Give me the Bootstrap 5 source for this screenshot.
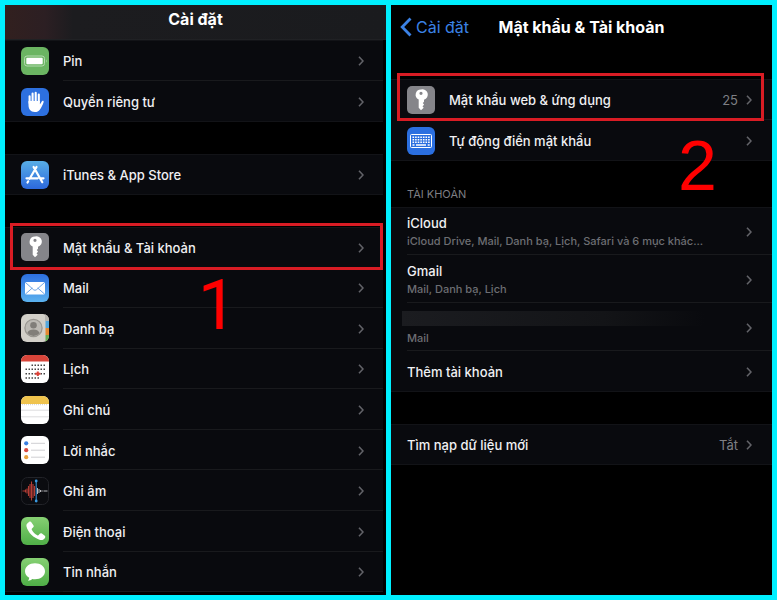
<!DOCTYPE html>
<html lang="vi" data-bs-theme="dark">
<head>
<meta charset="utf-8">
<meta name="viewport" content="width=device-width, initial-scale=1">
<title>Cài đặt</title>
<link href="https://cdn.jsdelivr.net/npm/bootstrap@5.3.0/dist/css/bootstrap.min.css" rel="stylesheet">
<style>
  body { background: #00f0ff; font-family: Inter, "Noto Sans", sans-serif; font-size: 13px; line-height: 18px; color: #f0f0f3; }
  .frame { display: grid; grid-template-columns: minmax(0, 1fr) minmax(0, 1fr); padding: 5px; gap: 5px; }
  .screen { background: #000; }
  .screen-left { padding-right: 3px; }
  .titlebar { height: 35px; padding-bottom: 7px; margin-right: -3px; border-bottom: 1px solid #202124;
    background: linear-gradient(90deg, #32201f 0, #2c1f23 40px, #1c1c1f 68px, #1a1b1e 100%); }
  .titlebar h1, .backbar h1 { font-size: 16px; line-height: 20px; font-weight: 700; color: #fff; }
  .backbar { display: grid; grid-template-columns: 1fr auto 1fr; align-items: center; height: 44px; padding: 0 9px; margin-bottom: 30px; }
  .back { color: #3b82e6; font-size: 16px; line-height: 20px; gap: 4px; }
  .group { background: #090a0e; box-shadow: inset 0 1px #121317, inset 0 -1px #121317; margin-bottom: 32px; }
  .group-long { margin-bottom: 3px; }
  .item { color: inherit; min-height: 40px; padding-left: 16px; }
  .group-short > .item, .group-accounts > .item { min-height: 41px; }
  .group-long > .item { flex: 1 1 0; min-height: 40px; }
  .group-accounts > .account { min-height: 48px; }
  .glyph { width: 28px; height: 28px; margin-right: 14px; flex: none; }
  .body-line { border-bottom: 1px solid #191a1d; padding: 2px 19px 0 0; gap: 8px; font-weight: 500; min-width: 0; }
  .screen-right .body-line { padding-right: 20px; }
  .item:last-child .body-line { border-bottom-color: transparent; }
  .group-long .item:last-child .body-line { border-bottom-color: #191a1d; }
  .chev { width: 6px; height: 10px; flex: none; }
  .value { color: #7e7f84; font-weight: 400; }
  .ring::before { content: ""; position: absolute; inset: -4px 0 -2px 5px; border: 3px solid #d91c24; z-index: 1; }
  .screen-right .ring::before { inset: -6px 8px -1px 6px; }
  .step { position: absolute; z-index: 2; color: #f00; font-size: 70px; line-height: 70px; font-weight: 400; pointer-events: none; }
  .step-one { left: 51%; top: 2px; font-family: Roboto, sans-serif; }
  .step-two { right: 55px; top: 11px; font-family: "Liberation Sans", Arial, sans-serif; }
  .section-label { font-size: 11px; line-height: 14px; font-weight: 400; color: #7e7f84; padding: 0 16px; margin: -6px 0 6px; }
  .note { color: #6d6e73; font-size: 11px; }
  .masked { height: 15px; margin: 2px 0 3px -5px; background: linear-gradient(90deg, #1b1c20, #131417 60%, #090a0e 90%); }
</style>
</head>
<body>
<svg class="position-absolute" width="0" height="0" aria-hidden="true">
  <symbol id="chevron" viewBox="0 0 6 10"><path d="M1 .8 5 5 1 9.200" fill="none" stroke="#626368" stroke-width="1.600"/></symbol>
  <symbol id="key" viewBox="0 0 28 28"><rect width="28" height="28" rx="5" fill="#85858a"/><path fill="#fff" fill-rule="evenodd" d="M14 3.500a5.300 5.300 0 0 0-2.300 10.100v8.200l2.300 2.500 2.700-2.500-1.200-1.500 1.600-1.600-1.300-1.700 1.200-1.300v-2A5.300 5.300 0 0 0 14 3.500Zm0 2.200a1.600 1.600 0 1 1 0 3.200 1.600 1.600 0 0 1 0-3.200Z"/></symbol>
  <linearGradient id="sky" x2="0" y2="1"><stop stop-color="#58aee6"/><stop offset="1" stop-color="#2c68dc"/></linearGradient>
  <linearGradient id="sea" x2="0" y2="1"><stop stop-color="#2d6fdf"/><stop offset="1" stop-color="#5bb2ef"/></linearGradient>
  <linearGradient id="leaf" x2="0" y2="1"><stop stop-color="#86d073"/><stop offset="1" stop-color="#4fae47"/></linearGradient>
  <clipPath id="tile"><rect width="28" height="28" rx="6"/></clipPath>
</svg>
<div class="frame min-vh-100">
  <main class="screen screen-left d-flex flex-column">
    <header class="titlebar d-flex align-items-center justify-content-center"><h1 class="m-0">Cài đặt</h1></header>
    <nav class="group group-short">
      <a href="#" class="item d-flex text-decoration-none"><svg class="glyph align-self-center" viewBox="0 0 28 28"><rect width="28" height="28" rx="6" fill="#6bb562"/><rect x="3.500" y="9" width="20" height="10" rx="2.500" fill="none" stroke="#b4dbaf"/><rect x="5.300" y="10.800" width="16.400" height="6.400" rx="1" fill="#fff"/><path d="M25 12.200q1.500 1.800 0 3.600Z" fill="#b4dbaf"/></svg>
        <span class="body-line flex-fill d-flex align-items-center justify-content-between">Pin<svg class="chev"><use href="#chevron"/></svg></span></a>
      <a href="#" class="item d-flex text-decoration-none"><svg class="glyph align-self-center" viewBox="0 0 28 28"><rect width="28" height="28" rx="6" fill="#2d70df"/><path d="M8.600 15V8.200M11.600 14V5.500M14.700 14V4.800M17.800 14V6.500" stroke="#fff" stroke-width="2.100" stroke-linecap="round"/><path fill="#fff" d="M7.500 13h11.400v3.300c1-.7 1.300-2.600 2.300-3.300.9-.6 1.800.1 1.400 1.200-.9 2.600-2.100 5.200-3.800 7.500-1.200 1.600-2.700 2.300-5 2.300-4.300 0-6.300-2.900-6.300-7Z"/></svg>
        <span class="body-line flex-fill d-flex align-items-center justify-content-between">Quyền riêng tư<svg class="chev"><use href="#chevron"/></svg></span></a>
    </nav>
    <nav class="group group-short">
      <a href="#" class="item d-flex text-decoration-none"><svg class="glyph align-self-center" viewBox="0 0 28 28"><rect width="28" height="28" rx="6" fill="url(#sky)"/><path d="M15.500 6 8.600 17.800M12.600 6l8.700 15.200M5.500 17.300h11.200M19.300 17.300h3.200M7.200 20.300l-.7 1.200" stroke="#fff" stroke-width="2.200" stroke-linecap="round"/></svg>
        <span class="body-line flex-fill d-flex align-items-center justify-content-between">iTunes &amp; App Store<svg class="chev"><use href="#chevron"/></svg></span></a>
    </nav>
    <nav class="group group-long flex-fill d-flex flex-column">
      <a href="#" class="item ring position-relative d-flex text-decoration-none"><svg class="glyph align-self-center"><use href="#key"/></svg>
        <span class="body-line flex-fill d-flex align-items-center justify-content-between">Mật khẩu &amp; Tài khoản<svg class="chev"><use href="#chevron"/></svg></span></a>
      <a href="#" class="item position-relative d-flex text-decoration-none"><svg class="glyph align-self-center" viewBox="0 0 28 28"><rect width="28" height="28" rx="6" fill="url(#sea)"/><rect x="4" y="8" width="20" height="12.500" rx="1.500" fill="#fff"/><path d="m4.500 8.500 8 7.200q1.500 1.200 3 0l8-7.200M4.500 20l6.800-6M23.500 20l-6.800-6" fill="none" stroke="#5c9ae2" stroke-width=".9"/></svg>
        <span class="body-line flex-fill d-flex align-items-center justify-content-between">Mail<svg class="chev"><use href="#chevron"/></svg></span><span class="step step-one">1</span></a>
      <a href="#" class="item d-flex text-decoration-none"><svg class="glyph align-self-center" viewBox="0 0 28 28"><g clip-path="url(#tile)"><path fill="#d2cfc8" d="M0 0h28v28H0z"/><path fill="#b8b5af" d="M24 0h4v7h-4z"/><path fill="#55a7dc" d="M24.500 7H28v7h-3.500z"/><path fill="#e58932" d="M24.500 14H28v7h-3.500z"/><path fill="#67ad55" d="M24.500 21H28v7h-3.500z"/></g><circle cx="12.500" cy="14" r="8.600" fill="#bdbab4" stroke="#98958f" stroke-width="1.200"/><circle cx="12.500" cy="11.300" r="3.300" fill="#817e79"/><path fill="#817e79" d="M6.300 19c1.200-2.600 3.400-3.500 6.200-3.500s5 1 6.200 3.500a8 8 0 0 1-12.400 0Z"/></svg>
        <span class="body-line flex-fill d-flex align-items-center justify-content-between">Danh bạ<svg class="chev"><use href="#chevron"/></svg></span></a>
      <a href="#" class="item d-flex text-decoration-none"><svg class="glyph align-self-center" viewBox="0 0 28 28"><g clip-path="url(#tile)"><path fill="#fff" d="M0 0h28v28H0z"/><path fill="#d8453a" d="M0 0h28v6.500H0z"/></g><path d="M10.500 10.200H24M4.500 14.300H24M4.500 18.700H24M4.500 23H18" stroke="#444" stroke-width="1.500" stroke-dasharray="1.500 1.500"/><path d="M14.200 18.700h5.200M16.800 16.500v4.400" stroke="#dd4137" stroke-width="2"/></svg>
        <span class="body-line flex-fill d-flex align-items-center justify-content-between">Lịch<svg class="chev"><use href="#chevron"/></svg></span></a>
      <a href="#" class="item d-flex text-decoration-none"><svg class="glyph align-self-center" viewBox="0 0 28 28"><g clip-path="url(#tile)"><path fill="#fff" d="M0 0h28v28H0z"/><path fill="#efc34d" d="M0 0h28v8H0z"/><path d="M0 14.200h28M0 20.800h28" stroke="#d4d4d6" stroke-width=".8"/><path d="M1 8.700h26" stroke="#aaa" stroke-width=".7" stroke-dasharray=".8 1.200"/></g></svg>
        <span class="body-line flex-fill d-flex align-items-center justify-content-between">Ghi chú<svg class="chev"><use href="#chevron"/></svg></span></a>
      <a href="#" class="item d-flex text-decoration-none"><svg class="glyph align-self-center" viewBox="0 0 28 28"><rect width="28" height="28" rx="6" fill="#fff"/><path d="M10 7.300h14M10 14.200h14M10 21.200h14" stroke="#cfcfd2"/><circle cx="5.200" cy="7.300" r="2.100" fill="#397fe2"/><circle cx="5.200" cy="14.200" r="2.100" fill="#da4a40"/><circle cx="5.200" cy="21.200" r="2.100" fill="#eaa03b"/></svg>
        <span class="body-line flex-fill d-flex align-items-center justify-content-between">Lời nhắc<svg class="chev"><use href="#chevron"/></svg></span></a>
      <a href="#" class="item d-flex text-decoration-none"><svg class="glyph align-self-center" viewBox="0 0 28 28"><rect x=".5" y=".5" width="27" height="27" rx="6" fill="#0b0c10" stroke="#222328"/><path d="M1.500 14h3M4.500 12.500v3M6 11.500v5M7.500 9v10M9 7v14M10.500 4.500v19M12 7v14M13.500 9v10" stroke="#b43d35" stroke-width="1.100"/><path d="M16.500 11v6M18 12v4M19.500 13v2M21 13.300v1.400M22.500 14h4" stroke="#b9b9bd"/><path d="M15.200 4v20" stroke="#3a9ae0"/><circle cx="15.200" cy="4" r="1.400" fill="#3a9ae0"/><circle cx="15.200" cy="24" r="1.400" fill="#3a9ae0"/></svg>
        <span class="body-line flex-fill d-flex align-items-center justify-content-between">Ghi âm<svg class="chev"><use href="#chevron"/></svg></span></a>
      <a href="#" class="item d-flex text-decoration-none"><svg class="glyph align-self-center" viewBox="0 0 28 28"><rect width="28" height="28" rx="6" fill="url(#leaf)"/><path fill="#fff" d="M8 5c1-.7 1.800-.4 2.500.5l1.900 2.700c.6.900.4 1.600-.4 2.300l-1 .9c-.4.400-.4.800-.2 1.300 1.300 2.500 3.100 4.200 5.500 5.500.5.300 1 .3 1.400-.2l.8-1c.7-.8 1.500-1 2.400-.4l2.600 1.800c.9.700 1.100 1.500.4 2.500-1.200 1.700-2.600 2.600-4.700 2C12.500 21 7 15.500 5.500 9.500 5 7.500 6.200 6.100 8 5Z"/></svg>
        <span class="body-line flex-fill d-flex align-items-center justify-content-between">Điện thoại<svg class="chev"><use href="#chevron"/></svg></span></a>
      <a href="#" class="item d-flex text-decoration-none"><svg class="glyph align-self-center" viewBox="0 0 28 28"><rect width="28" height="28" rx="6" fill="url(#leaf)"/><path fill="#fff" d="M14 5.300c5.700 0 10 3.500 10 8s-4.300 8-10 8c-1 0-1.900-.1-2.800-.3-1 .9-2.500 1.700-4.200 1.700.8-.9 1.200-1.900 1.200-3C5.600 18.300 4 16 4 13.300c0-4.500 4.300-8 10-8Z"/></svg>
        <span class="body-line flex-fill d-flex align-items-center justify-content-between">Tin nhắn<svg class="chev"><use href="#chevron"/></svg></span></a>
    </nav>
  </main>

  <section class="screen screen-right">
    <header class="backbar">
      <a href="#" class="back d-flex align-items-center text-decoration-none"><svg width="12" height="20" viewBox="0 0 12 20"><path d="M10.500 1.500 2.200 10l8.300 8.500" fill="none" stroke="#3b82e6" stroke-width="2.800"/></svg>Cài đặt</a>
      <h1 class="m-0">Mật khẩu &amp; Tài khoản</h1>
    </header>
    <nav class="group group-short">
      <a href="#" class="item ring position-relative d-flex text-decoration-none"><svg class="glyph align-self-center"><use href="#key"/></svg>
        <span class="body-line flex-fill d-flex align-items-center">Mật khẩu web &amp; ứng dụng<span class="value ms-auto">25</span><svg class="chev"><use href="#chevron"/></svg></span></a>
      <a href="#" class="item position-relative d-flex text-decoration-none"><svg class="glyph align-self-center" viewBox="0 0 28 28"><rect width="28" height="28" rx="6" fill="#2b6fe0"/><rect x="3.500" y="7.500" width="21" height="13" rx="1" fill="none" stroke="#fff"/><path d="M5.500 10.300h17.200M5.500 12.800h17.200M5.500 15.300h17.200" stroke="#fff" stroke-width="1.500" stroke-dasharray="1.600 1"/><path d="M5.500 18h2M9 18h10M20.700 18h2" stroke="#fff" stroke-width="1.500"/></svg>
        <span class="body-line flex-fill d-flex align-items-center justify-content-between">Tự động điền mật khẩu<svg class="chev"><use href="#chevron"/></svg></span><span class="step step-two">2</span></a>
    </nav>
    <h2 class="section-label">TÀI KHOẢN</h2>
    <nav class="group group-accounts">
      <a href="#" class="item account d-flex text-decoration-none"><span class="body-line flex-fill d-flex align-items-center justify-content-between"><span class="text-truncate">iCloud<span class="note d-block text-truncate">iCloud Drive, Mail, Danh bạ, Lịch, Safari và 6 mục khác...</span></span><svg class="chev"><use href="#chevron"/></svg></span></a>
      <a href="#" class="item account d-flex text-decoration-none"><span class="body-line flex-fill d-flex align-items-center justify-content-between"><span>Gmail<span class="note d-block">Mail, Danh bạ, Lịch</span></span><svg class="chev"><use href="#chevron"/></svg></span></a>
      <a href="#" class="item account d-flex text-decoration-none"><span class="body-line flex-fill d-flex align-items-center justify-content-between"><span class="flex-fill"><span class="masked d-block"></span><span class="note d-block">Mail</span></span><svg class="chev"><use href="#chevron"/></svg></span></a>
      <a href="#" class="item d-flex text-decoration-none"><span class="body-line flex-fill d-flex align-items-center justify-content-between">Thêm tài khoản<svg class="chev"><use href="#chevron"/></svg></span></a>
    </nav>
    <nav class="group group-short">
      <a href="#" class="item d-flex text-decoration-none"><span class="body-line flex-fill d-flex align-items-center">Tìm nạp dữ liệu mới<span class="value ms-auto">Tắt</span><svg class="chev"><use href="#chevron"/></svg></span></a>
    </nav>
  </section>
</div>
<script src="https://cdn.jsdelivr.net/npm/bootstrap@5.3.0/dist/js/bootstrap.bundle.min.js"></script>
</body>
</html>
